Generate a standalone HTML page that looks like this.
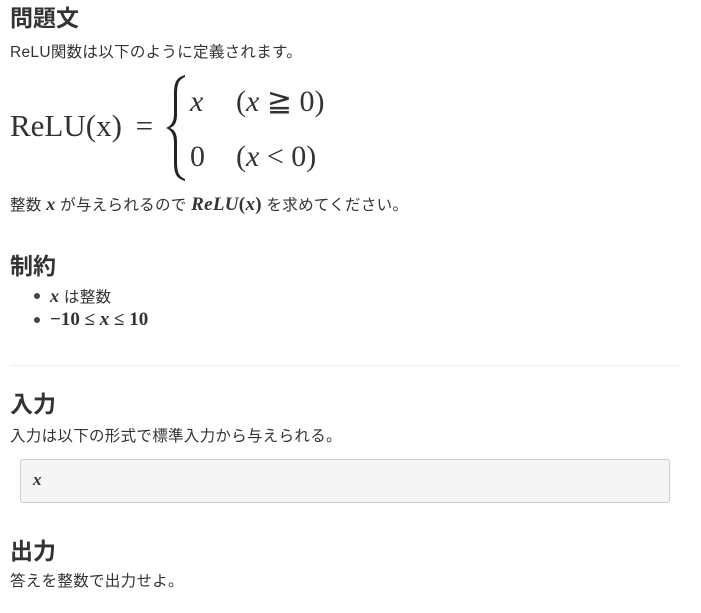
<!DOCTYPE html>
<html><head><meta charset="utf-8"><style>
body{margin:0;width:701px;height:613px;background:#fff;color:#333;font-family:"Liberation Sans","Noto Sans CJK JP",sans-serif;position:relative;overflow:hidden}
.a{position:absolute;white-space:nowrap}
h{font-weight:bold;font-size:23px;line-height:26px}
.t{font-size:15.5px;line-height:20px;letter-spacing:0.3px}
.m{font-family:"Liberation Serif",serif}
.bi{font-family:"Liberation Serif",serif;font-style:italic;font-weight:bold}
.dot{position:absolute;width:6px;height:6px;border-radius:50%;background:#444}
</style></head><body>
<div class="a" style="left:10px;top:5px"><h>問題文</h></div>
<div class="a t" style="left:10px;top:43px">ReLU関数は以下のように定義されます。</div>
<div class="a m" style="left:10px;top:108px;font-size:31px;line-height:36px">ReLU(x) <span style="margin-left:6px">=</span></div>
<svg class="a" style="left:164px;top:74px" width="24" height="108" viewBox="0 0 24 108">
<path d="M21 1 C11 4 10 10 10 22 L10 40 C10 48 7 52 2 54 C7 56 10 60 10 68 L10 86 C10 98 11 104 21 107 L21 105 C14 102 13 97 13 86 L13 68 C13 60 11 56 6 54 C11 52 13 48 13 40 L13 22 C13 11 14 6 21 3 Z" fill="#222"/></svg>
<div class="a m" style="left:190px;top:85px;font-size:30px;line-height:34px"><i>x</i></div>
<div class="a m" style="left:236px;top:85px;font-size:30px;line-height:34px">(<i>x</i> ≧ 0)</div>
<div class="a m" style="left:190px;top:140px;font-size:30px;line-height:34px">0</div>
<div class="a m" style="left:236px;top:140px;font-size:30px;line-height:34px">(<i>x</i> &lt; 0)</div>
<div class="a t" style="left:10px;top:194px">整数 <span class="bi" style="font-size:18px">x</span> が与えられるので <span class="bi" style="font-size:19px">ReLU</span><span class="m" style="font-size:19px;font-weight:bold">(</span><span class="bi" style="font-size:19px">x</span><span class="m" style="font-size:19px;font-weight:bold">)</span> を求めてください。</div>
<div class="a" style="left:10px;top:253px"><h>制約</h></div>
<div class="dot" style="left:34px;top:293px"></div>
<div class="a t" style="left:50px;top:286px"><span class="bi" style="font-size:18px">x</span> は整数</div>
<div class="dot" style="left:34px;top:317px"></div>
<div class="a m" style="left:50px;top:309px;font-size:19px;font-weight:bold;line-height:22px">−10 ≤ <i>x</i> ≤ 10</div>
<div class="a" style="left:10px;top:365px;width:670px;height:1px;background:#eee"></div>
<div class="a" style="left:10px;top:391px"><h>入力</h></div>
<div class="a t" style="left:10px;top:427px">入力は以下の形式で標準入力から与えられる。</div>
<div class="a" style="left:20px;top:459px;width:648px;height:42px;background:#f5f5f5;border:1px solid #ccc;border-radius:3px"></div>
<div class="a bi" style="left:33px;top:470px;font-size:17px;line-height:20px">x</div>
<div class="a" style="left:10px;top:538px"><h>出力</h></div>
<div class="a t" style="left:10px;top:572px">答えを整数で出力せよ。</div>
</body></html>
